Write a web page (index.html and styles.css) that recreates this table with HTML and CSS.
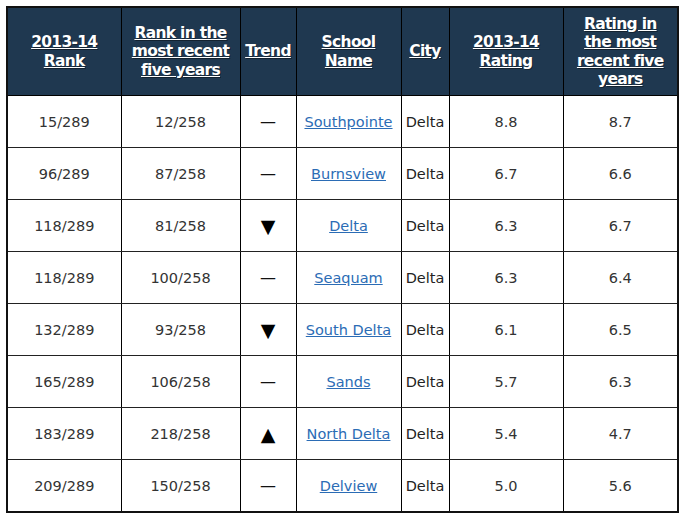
FILE: index.html
```html
<!DOCTYPE html>
<html>
<head>
<meta charset="utf-8">
<link rel="stylesheet" href="styles.css">
</head>
<body>
<table class="rank-table">
  <colgroup>
    <col class="c1"><col class="c2"><col class="c3"><col class="c4"><col class="c5"><col class="c6"><col class="c7">
  </colgroup>
  <thead>
    <tr>
      <th><a href="#">2013-14<br>Rank</a></th>
      <th><a href="#">Rank in the most recent five years</a></th>
      <th><a href="#">Trend</a></th>
      <th><a href="#">School Name</a></th>
      <th><a href="#">City</a></th>
      <th><a href="#">2013-14<br>Rating</a></th>
      <th><a href="#">Rating in the most recent five years</a></th>
    </tr>
  </thead>
  <tbody>
    <tr><td>15/289</td><td>12/258</td><td><span class="dash">—</span></td><td><a href="#">Southpointe</a></td><td class="city">Delta</td><td>8.8</td><td>8.7</td></tr>
    <tr><td>96/289</td><td>87/258</td><td><span class="dash">—</span></td><td><a href="#">Burnsview</a></td><td class="city">Delta</td><td>6.7</td><td>6.6</td></tr>
    <tr><td>118/289</td><td>81/258</td><td><span class="tri">▼</span></td><td><a href="#">Delta</a></td><td class="city">Delta</td><td>6.3</td><td>6.7</td></tr>
    <tr><td>118/289</td><td>100/258</td><td><span class="dash">—</span></td><td><a href="#">Seaquam</a></td><td class="city">Delta</td><td>6.3</td><td>6.4</td></tr>
    <tr><td>132/289</td><td>93/258</td><td><span class="tri">▼</span></td><td><a href="#">South Delta</a></td><td class="city">Delta</td><td>6.1</td><td>6.5</td></tr>
    <tr><td>165/289</td><td>106/258</td><td><span class="dash">—</span></td><td><a href="#">Sands</a></td><td class="city">Delta</td><td>5.7</td><td>6.3</td></tr>
    <tr><td>183/289</td><td>218/258</td><td><span class="tri">▲</span></td><td><a href="#">North Delta</a></td><td class="city">Delta</td><td>5.4</td><td>4.7</td></tr>
    <tr><td>209/289</td><td>150/258</td><td><span class="dash">—</span></td><td><a href="#">Delview</a></td><td class="city">Delta</td><td>5.0</td><td>5.6</td></tr>
  </tbody>
</table>
</body>
</html>
```

FILE: styles.css
```css
html, body {
  margin: 0;
  padding: 0;
  background: #ffffff;
}
body {
  padding: 6px 0 0 6px;
  font-family: "DejaVu Sans", Verdana, sans-serif;
}
.rank-table {
  border-collapse: collapse;
  table-layout: fixed;
  width: 673px;
  border: 2px solid #111;
}
.c1 { width: 114px; }
.c2 { width: 119px; }
.c3 { width: 56px; }
.c4 { width: 105px; }
.c5 { width: 48px; }
.c6 { width: 114px; }
.c7 { width: 115px; }
.rank-table th {
  background: #1f3850;
  height: 87px;
  padding: 0 4px;
  border: 1px solid #000;
  font-size: 15.5px;
  line-height: 18.5px;
  font-weight: bold;
  letter-spacing: -0.7px;
  vertical-align: middle;
  text-align: center;
}
.rank-table th:last-child {
  padding: 0 8px;
}
.rank-table th a {
  color: #ffffff;
  text-decoration: underline;
  text-shadow: 1px 1px 0 rgba(0,0,0,0.4);
}
.rank-table td {
  height: 51px;
  padding: 0;
  border: 1px solid #222;
  border-left-color: #000;
  border-right-color: #000;
  font-size: 14.5px;
  color: #333333;
  text-align: center;
  vertical-align: middle;
}
.rank-table td a {
  color: #2b6cb5;
  text-decoration: underline;
}
.rank-table td.city {
  color: #222;
}
.dash {
  color: #111;
  font-size: 16px;
}
.tri {
  color: #000;
  font-size: 19px;
}
```
